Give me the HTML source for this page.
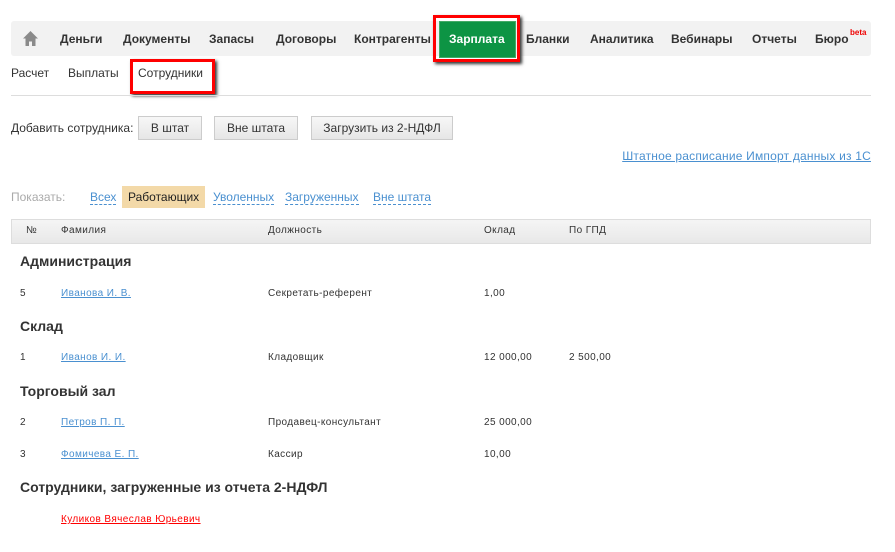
<!DOCTYPE html>
<html><head><meta charset="utf-8"><style>
body{margin:0;width:895px;height:552px;background:#fff;font-family:"Liberation Sans",Arial,sans-serif;position:relative;overflow:hidden;color:#333}
.a{position:absolute;white-space:nowrap}
.nav{font-weight:bold;font-size:12px;color:#333;top:32px}
.btn{position:absolute;top:116px;height:24px;border:1px solid #ccc;background:linear-gradient(#f7f7f7,#e6e6e6);font-size:12px;color:#333;text-align:center;line-height:23px;box-sizing:border-box}
.sm{font-size:10px;letter-spacing:0.4px;color:#333}
.lk{color:#4a90d0;text-decoration:underline}
.dl{color:#4a90d0;border-bottom:1px dashed #4a90d0;font-size:12px}
.h{font-size:14px;font-weight:bold;color:#333}
</style></head><body>
<div class="a" style="left:11px;top:21px;width:860px;height:35px;background:#f2f2f2;border-radius:3px"></div>
<svg class="a" style="left:22px;top:30px" width="17" height="17" viewBox="0 0 17 17"><path d="M8.5 1L1 8.5h2.5V16h3.5v-4.5h3V16h3.5V8.5H16z" fill="#8a8a8a"/></svg>
<div class="a nav" style="left:60px">Деньги</div>
<div class="a nav" style="left:123px">Документы</div>
<div class="a nav" style="left:209px">Запасы</div>
<div class="a nav" style="left:276px">Договоры</div>
<div class="a nav" style="left:354px">Контрагенты</div>
<div class="a" style="left:433px;top:15px;width:81px;height:41px;border:3px solid #f00;box-shadow:2px 2px 3px #333"></div>
<div class="a" style="left:439px;top:21px;width:75px;height:35px;background:#0d9444;border:1px solid #4a6"></div>
<div class="a nav" style="left:449px;color:#fff">Зарплата</div>
<div class="a nav" style="left:526px">Бланки</div>
<div class="a nav" style="left:590px">Аналитика</div>
<div class="a nav" style="left:671px">Вебинары</div>
<div class="a nav" style="left:752px">Отчеты</div>
<div class="a nav" style="left:815px">Бюро</div>
<div class="a" style="left:850px;top:28px;font-size:8px;color:#e00;font-weight:bold">beta</div>

<div class="a" style="left:11px;top:66px;font-size:12px">Расчет</div>
<div class="a" style="left:68px;top:66px;font-size:12px">Выплаты</div>
<div class="a" style="left:138px;top:66px;font-size:12px">Сотрудники</div>
<div class="a" style="left:130px;top:59px;width:79px;height:29px;border:3px solid #f00;box-shadow:2px 2px 3px #333"></div>
<div class="a" style="left:11px;top:95px;width:860px;height:1px;background:#ddd"></div>

<div class="a" style="left:11px;top:121px;font-size:12px">Добавить сотрудника:</div>
<div class="btn" style="left:138px;width:64px">В штат</div>
<div class="btn" style="left:214px;width:84px">Вне штата</div>
<div class="btn" style="left:311px;width:142px">Загрузить из 2-НДФЛ</div>
<div class="a lk" style="right:24px;top:149px;font-size:12px;letter-spacing:0.2px">Штатное расписание Импорт данных из 1С</div>

<div class="a" style="left:11px;top:190px;font-size:12px;color:#aaa">Показать:</div>
<div class="a dl" style="left:90px;top:190px">Всех</div>
<div class="a" style="left:122px;top:186px;width:83px;height:22px;background:#f3d9a8"></div>
<div class="a" style="left:128px;top:190px;font-size:12px;color:#222">Работающих</div>
<div class="a dl" style="left:213px;top:190px">Уволенных</div>
<div class="a dl" style="left:285px;top:190px">Загруженных</div>
<div class="a dl" style="left:373px;top:190px">Вне штата</div>

<div class="a" style="left:11px;top:219px;width:858px;height:23px;border:1px solid #ddd;background:linear-gradient(#f5f5f5,#e8e8e8)"></div>
<div class="a sm" style="left:26px;top:225px">№</div>
<div class="a sm" style="left:61px;top:225px">Фамилия</div>
<div class="a sm" style="left:268px;top:225px">Должность</div>
<div class="a sm" style="left:484px;top:225px">Оклад</div>
<div class="a sm" style="left:569px;top:225px">По ГПД</div>

<div class="a h" style="left:20px;top:253px">Администрация</div>
<div class="a sm" style="left:20px;top:288px">5</div>
<div class="a sm lk" style="left:61px;top:288px">Иванова И. В.</div>
<div class="a sm" style="left:268px;top:288px">Секретать-референт</div>
<div class="a sm" style="left:484px;top:288px">1,00</div>

<div class="a h" style="left:20px;top:318px">Склад</div>
<div class="a sm" style="left:20px;top:352px">1</div>
<div class="a sm lk" style="left:61px;top:352px">Иванов И. И.</div>
<div class="a sm" style="left:268px;top:352px">Кладовщик</div>
<div class="a sm" style="left:484px;top:352px">12 000,00</div>
<div class="a sm" style="left:569px;top:352px">2 500,00</div>

<div class="a h" style="left:20px;top:383px">Торговый зал</div>
<div class="a sm" style="left:20px;top:417px">2</div>
<div class="a sm lk" style="left:61px;top:417px">Петров П. П.</div>
<div class="a sm" style="left:268px;top:417px">Продавец-консультант</div>
<div class="a sm" style="left:484px;top:417px">25 000,00</div>
<div class="a sm" style="left:20px;top:449px">3</div>
<div class="a sm lk" style="left:61px;top:449px">Фомичева Е. П.</div>
<div class="a sm" style="left:268px;top:449px">Кассир</div>
<div class="a sm" style="left:484px;top:449px">10,00</div>

<div class="a h" style="left:20px;top:479px">Сотрудники, загруженные из отчета 2-НДФЛ</div>
<div class="a sm" style="left:61px;top:514px;color:#f00;text-decoration:underline">Куликов Вячеслав Юрьевич</div>
</body></html>
